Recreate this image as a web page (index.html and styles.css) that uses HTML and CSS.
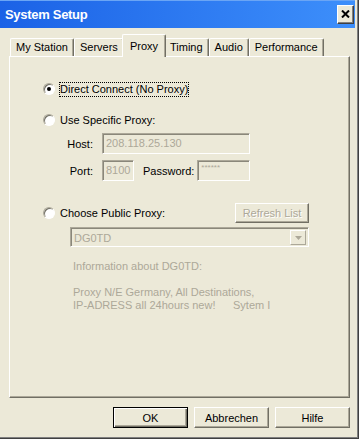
FILE: index.html
```html
<!doctype html>
<html lang="en">

<head>
    <title>System Setup</title>
    <meta charset="utf-8">
    <link rel="stylesheet" href="styles.css">
</head>

<body>
    <div class="window">
        <div class="titlebar">
            <span class="title">System Setup</span>
            <span class="close">
                <svg width="9" height="8" viewBox="0 0 9 8">
                    <path d="M1 0.5 L8 7.5 M8 0.5 L1 7.5" stroke="#000" stroke-width="2" fill="none" />
                </svg>
            </span>
        </div>

        <div class="client">
            <div class="tabs">
                <div class="tab">My Station</div>
                <div class="tab">Servers</div>
                <div class="tab active">Proxy</div>
                <div class="tab">Timing</div>
                <div class="tab">Audio</div>
                <div class="tab">Performance</div>
            </div>

            <div class="panel">
                <div class="opt first">
                    <span class="radio"><span class="dot"></span></span>
                    <span class="label focus">Direct Connect (No Proxy)</span>
                </div>

                <div class="opt second">
                    <span class="radio"></span>
                    <span class="label">Use Specific Proxy:</span>
                </div>

                <div class="fields">
                    <span class="flabel">Host:</span>
                    <div class="field">208.118.25.130</div>
                    <span class="flabel">Port:</span>
                    <div class="portrow">
                        <div class="field port">8100</div>
                        <span class="pwlabel">Password:</span>
                        <div class="field pw"><span class="stars">******</span></div>
                    </div>
                </div>

                <div class="opt public">
                    <div class="opt-left">
                        <span class="radio"></span>
                        <span class="label">Choose Public Proxy:</span>
                    </div>
                    <button class="btn disabled refresh">Refresh List</button>
                </div>

                <div class="combo">
                    <span class="combo-text">DG0TD</span>
                    <span class="combo-drop">
                        <svg width="7" height="4" viewBox="0 0 7 4">
                            <path d="M0 0 H7 L3.5 4 Z" fill="#aca899" />
                        </svg>
                    </span>
                </div>

                <div class="info">
                    <div>Information about DG0TD:</div>
                    <div>&nbsp;</div>
                    <div>Proxy N/E Germany, All Destinations,</div>
                    <div><span class="tabcol">IP-ADRESS all 24hours new!</span>Sytem I</div>
                </div>
            </div>

            <div class="buttons">
                <button class="btn default">OK</button>
                <button class="btn">Abbrechen</button>
                <button class="btn">Hilfe</button>
            </div>
        </div>
    </div>
</body>

</html>
```

FILE: styles.css
```css
body {
    margin: 0;
    background: #ece9d8;
    font-family: "Liberation Sans", Arial, sans-serif;
    font-size: 11px;
    color: #000;
}

.window {
    width: 359px;
    height: 439px;
    box-sizing: border-box;
    border-right: 1px solid #404040;
    border-bottom: 1px solid #404040;
    box-shadow: inset -1px -1px 0 #808080;
    padding: 0 2px 2px 0;
    display: flex;
    flex-direction: column;
}

/* title bar */
.titlebar {
    height: 28px;
    margin-right: 1px;
    background: linear-gradient(to right, #1b62e6, #3d8ffb);
    box-shadow: inset 0 1px 0 #6aa5f5;
    display: flex;
    align-items: center;
    justify-content: space-between;
    padding: 0 1px 0 5px;
}

.title {
    color: #fff;
    font-weight: bold;
    font-size: 13px;
    letter-spacing: -0.3px;
}

.close {
    width: 17px;
    height: 19px;
    box-sizing: border-box;
    background: #ece9d8;
    border: 1px solid;
    border-color: #fff #404040 #404040 #fff;
    box-shadow: inset -1px -1px 0 #808080;
    display: flex;
    align-items: center;
    justify-content: center;
}

.client {
    flex: 1;
    padding: 5px 6px 0 9px;
    display: flex;
    flex-direction: column;
}

/* tabs */
.tabs {
    display: flex;
    align-items: flex-end;
    height: 23px;
    padding-left: 1px;
}

.tab {
    height: 18px;
    box-sizing: border-box;
    border: 1px solid;
    border-bottom: none;
    border-color: #fff #716f64 #716f64 #fff;
    border-radius: 2px 2px 0 0;
    box-shadow: inset -1px 0 0 #aca899;
    padding: 0 5px;
    line-height: 16px;
}

.tab.active {
    height: 23px;
    margin: 0 -2px -1px;
    padding: 3px 7px 0;
    background: #ece9d8;
    position: relative;
    z-index: 2;
}

/* panel */
.panel {
    height: 342px;
    box-sizing: border-box;
    border: 1px solid;
    border-color: #fff #716f64 #716f64 #fff;
    box-shadow: inset -1px -1px 0 #aca899;
    padding-left: 33px;
}

.opt {
    display: flex;
    align-items: center;
    height: 16px;
    gap: 4px;
}

.opt.first {
    margin-top: 24px;
}

.opt.second {
    margin-top: 15px;
}

.radio {
    width: 12px;
    height: 12px;
    box-sizing: border-box;
    border-radius: 50%;
    background: #fff;
    border: 1px solid;
    border-color: #aca899 #fff #fff #aca899;
    box-shadow: inset 1px 1px 0 #716f64;
    display: flex;
    align-items: center;
    justify-content: center;
}

.dot {
    width: 4px;
    height: 4px;
    border-radius: 50%;
    background: #000;
}

.label {
    border: 1px dotted transparent;
    padding: 0;
    line-height: 13px;
}

.label.focus {
    border-color: #000;
}

.fields {
    display: grid;
    grid-template-columns: 50px 148px;
    column-gap: 9px;
    row-gap: 6px;
    align-items: center;
    margin-top: 5px;
}

.flabel {
    text-align: right;
}

.field {
    height: 21px;
    box-sizing: border-box;
    border: 1px solid;
    border-color: #aca899 #fff #fff #aca899;
    box-shadow: inset 1px 1px 0 #8a877a;
    color: #aca899;
    padding: 0 3px;
    line-height: 19px;
    overflow: hidden;
}

.portrow {
    display: flex;
    align-items: center;
}

.field.port {
    width: 32px;
}

.pwlabel {
    margin: 0 3px 0 9px;
}

.field.pw {
    flex: 1;
    line-height: 10px;
}

.stars {
    font-size: 8px;
}

.opt.public {
    height: 20px;
    width: 266px;
    margin-top: 22px;
    justify-content: space-between;
}

.opt-left {
    display: flex;
    align-items: center;
    gap: 4px;
}

/* buttons */
.btn {
    width: 75px;
    height: 21px;
    box-sizing: border-box;
    background: #ece9d8;
    border: 1px solid;
    border-color: #fff #716f64 #716f64 #fff;
    box-shadow: inset -1px -1px 0 #aca899;
    font-family: inherit;
    font-size: 11px;
    color: #000;
    padding: 0;
}

.btn.default {
    border-color: #000;
    box-shadow: inset 1px 1px 0 #fff, inset -1px -1px 0 #716f64, inset -2px -2px 0 #aca899;
}

.btn.disabled {
    color: #aca899;
    text-shadow: 1px 1px 0 #fff;
}

.btn.refresh {
    width: 74px;
    height: 20px;
}

.combo {
    width: 239px;
    height: 20px;
    box-sizing: border-box;
    margin: 4px 0 0 27px;
    border: 1px solid;
    border-color: #aca899 #fff #fff #aca899;
    box-shadow: inset 1px 1px 0 #8a877a;
    display: flex;
    align-items: center;
    justify-content: space-between;
    padding: 2px 2px 1px 3px;
    color: #aca899;
}

.combo-drop {
    width: 16px;
    height: 100%;
    box-sizing: border-box;
    border: 1px solid;
    border-color: #fff #aca899 #aca899 #fff;
    display: flex;
    align-items: center;
    justify-content: center;
}

.info {
    margin: 13px 0 0 30px;
    line-height: 13px;
    color: #aca899;
}

.tabcol {
    display: inline-block;
    width: 160px;
}

.buttons {
    display: flex;
    justify-content: flex-end;
    gap: 6px;
    margin-top: 9px;
}
```
